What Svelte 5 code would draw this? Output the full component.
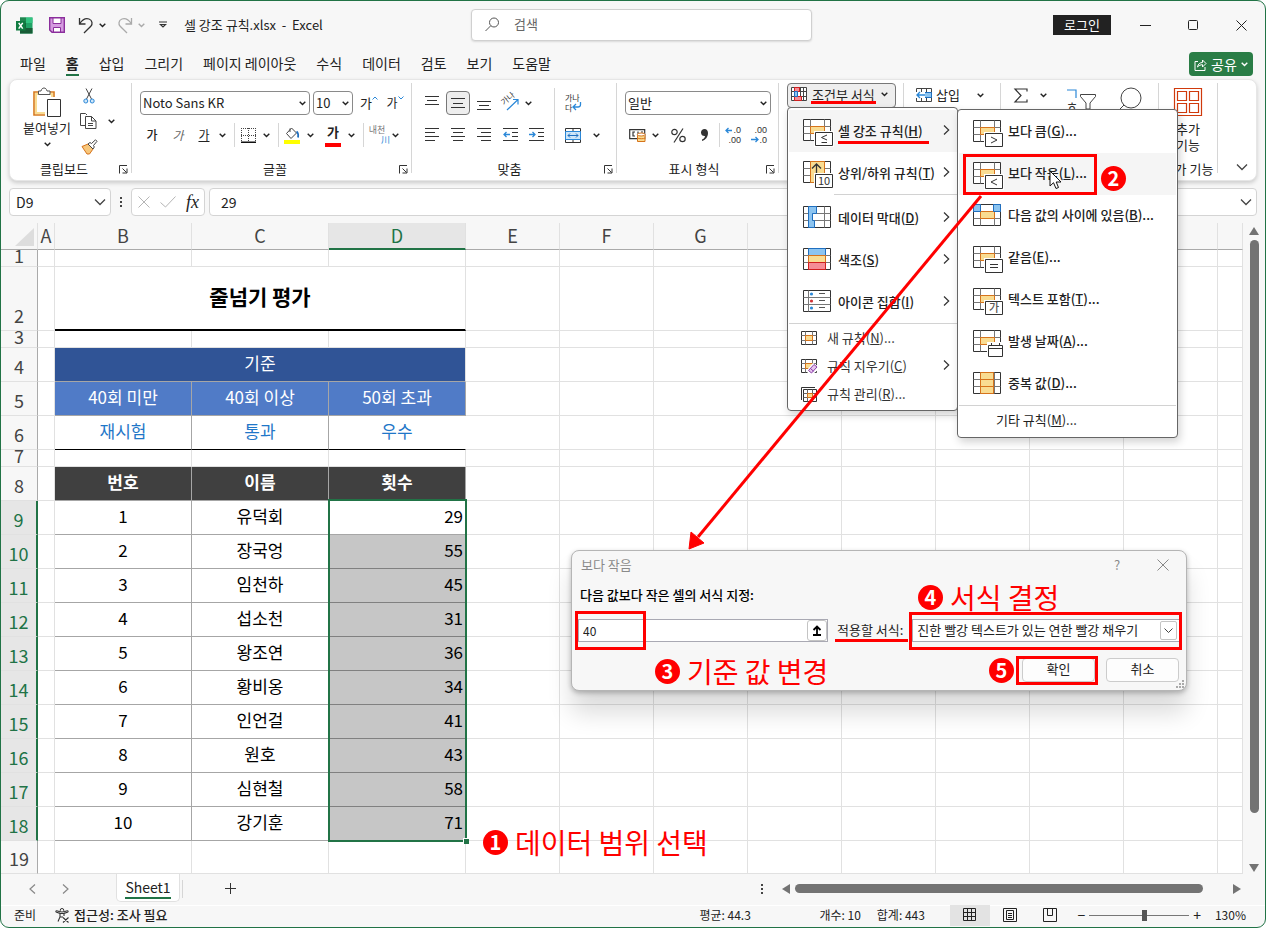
<script>
	const tabs = ['파일', '홈', '삽입', '그리기', '페이지 레이아웃', '수식', '데이터', '검토', '보기', '도움말'];

	const mainMenu = [
		{ text: '셀 강조 규칙', key: 'H', icon: 'le', sub: true, active: true },
		{ text: '상위/하위 규칙', key: 'T', icon: 'top', sub: true, line: 'short' },
		{ text: '데이터 막대', key: 'D', icon: 'bars', sub: true },
		{ text: '색조', key: 'S', icon: 'scale', sub: true },
		{ text: '아이콘 집합', key: 'I', icon: 'set', sub: true, line: 'full' },
		{ text: '새 규칙', key: 'N', icon: 'new', small: true, dots: true },
		{ text: '규칙 지우기', key: 'C', icon: 'clear', small: true, sub: true },
		{ text: '규칙 관리', key: 'R', icon: 'manage', small: true, dots: true }
	];

	const subMenu = [
		{ text: '보다 큼', key: 'G', icon: 'gt' },
		{ text: '보다 작음', key: 'L', icon: 'lt', active: true },
		{ text: '다음 값의 사이에 있음', key: 'B', icon: 'between' },
		{ text: '같음', key: 'E', icon: 'eq' },
		{ text: '텍스트 포함', key: 'T', icon: 'text' },
		{ text: '발생 날짜', key: 'A', icon: 'date' },
		{ text: '중복 값', key: 'D', icon: 'dup' }
	];

	const people = [
		['유덕회', 29],
		['장국엉', 55],
		['임천하', 45],
		['섭소천', 31],
		['왕조연', 36],
		['황비옹', 34],
		['인언걸', 41],
		['원호', 43],
		['심현철', 58],
		['강기훈', 71]
	];

	const columns = ['A', 'B', 'C', 'D', 'E', 'F', 'G', 'H', 'I', 'J', 'K', 'L', ''];
	const rest = Array(9).fill('');

	let limit = $state('40');
	let zoom = $state(56);
</script>

{#snippet chev()}
	<svg class="chev" width="7" height="5" viewBox="0 0 7 5" aria-hidden="true">
		<path d="M.7 .8 3.5 3.6 6.3 .8" fill="none" stroke="currentColor" stroke-width="1.4" />
	</svg>
{/snippet}

{#snippet bigChev()}
	<svg width="12" height="8" viewBox="0 0 12 8" aria-hidden="true">
		<path d="M1 1.5 6 6.5 11 1.5" fill="none" stroke="#444" stroke-width="1.3" />
	</svg>
{/snippet}

{#snippet launcher()}
	<button class="launcher" aria-label="옵션">
		<svg width="9" height="9" viewBox="0 0 9 9">
			<path d="M.5 8.5V.5H8M3.5 3.5 7.5 7.5M8 3.5V8H3.5" fill="none" stroke="#333" />
		</svg>
	</button>
{/snippet}

{#snippet lines(rows)}
	<svg width="14" height="14" viewBox="0 0 14 14" aria-hidden="true">
		{#each rows as [x, y, len]}
			<path d="M{x} {y}.5h{len}" stroke="#333" />
		{/each}
	</svg>
{/snippet}

{#snippet ruleIcon(kind)}
	<svg width="32" height="28" viewBox="0 0 32 28" aria-hidden="true">
		<path d="M.5 .5h27v21H.5z" fill="#fff" stroke="#333" />
		{#if kind === 'set'}
			<path d="M.5 7.5h27M.5 14.5h27" stroke="#777" />
			<path d="M5.5 .5v21" stroke="#777" />
			<circle cx="8.5" cy="4" r="1.6" fill="#2b88d8" />
			<circle cx="8.5" cy="11" r="1.6" fill="#d13438" />
			<circle cx="8.5" cy="18" r="1.6" fill="#2b88d8" />
			<path d="M16 3.5h6M16 10.5h6M16 17.5h6" stroke="#555" />
		{:else}
			<path d="M7.5 .5v21M21.5 .5v21M.5 7.5h27M.5 14.5h27" stroke="#777" fill="none" />
		{/if}
		{#if ['le', 'gt', 'lt', 'between', 'eq', 'text', 'date'].includes(kind)}
			<path d="M7.5 7.5h14v7h-14z" fill="#f9dc92" stroke="#d6731b" />
		{/if}
		{#if kind === 'between'}
			<path d="M.5 .5h7v7h-7zM20.5 .5h7v7h-7z" fill="#8cc4f0" stroke="#1f6fc0" />
		{:else if kind === 'top'}
			<path d="M7.5 .5h14v21h-14z" fill="#f9dc92" stroke="#d6731b" />
			<path d="M13.5 17V3M9 7.5 13.5 3 18 7.5" fill="none" stroke="#333" stroke-width="1.3" />
		{:else if kind === 'bars'}
			<path d="M5.5 .5h8v7h-4v7h2v7h-6z" fill="#8cc4f0" stroke="#1f6fc0" />
		{:else if kind === 'scale'}
			<path d="M5.5 .5h17v7h-17z" fill="#8cc4f0" stroke="#1f6fc0" />
			<path d="M5.5 7.5h17v7h-17z" fill="#f9dc92" stroke="#d6731b" />
			<path d="M5.5 14.5h17v7h-17z" fill="#f58c96" stroke="#d11f1f" />
		{:else if kind === 'dup'}
			<path d="M7.5 .5h13v21h-13zM7.5 7.5h13M7.5 14.5h13" fill="#f9dc92" stroke="#d6731b" />
		{/if}
		{#if ['le', 'gt', 'lt', 'eq', 'text', 'top'].includes(kind)}
			<path d="M11 12h20v16H11z" fill="#fff" />
			<path d="M12.5 13.5h17v13h-17z" fill="#fff" stroke="#333" />
		{/if}
		{#if kind === 'le'}
			<path d="M24 16 18.5 18.5 24 21M18.5 23.5H24" fill="none" stroke="#333" />
		{:else if kind === 'gt'}
			<path d="M18 17 24 20 18 23" fill="none" stroke="#333" />
		{:else if kind === 'lt'}
			<path d="M24 17 18 20 24 23" fill="none" stroke="#333" />
		{:else if kind === 'eq'}
			<path d="M17 18.5h8M17 21.5h8" stroke="#333" />
		{:else if kind === 'text'}
			<text x="21" y="24" text-anchor="middle" font-size="11" fill="#555">가</text>
		{:else if kind === 'top'}
			<text x="21" y="24" text-anchor="middle" font-size="11" font-weight="400" fill="#333">10</text>
		{:else if kind === 'date'}
			<path d="M14 12h17v16H14z" fill="#fff" />
			<path d="M15.5 15.5h14v11h-14zM15.5 18.5h14M18.5 13v3M26.5 13v3" fill="none" stroke="#333" />
		{/if}
	</svg>
{/snippet}

{#snippet smallIcon(kind)}
	<svg width="17" height="15" viewBox="0 0 17 15" aria-hidden="true">
		{#if kind === 'manage'}
			<path d="M.5 13V.5H14" fill="none" stroke="#333" />
			<g transform="translate(2 2)">
				<path d="M.5 .5h13v12H.5z" fill="#fff" stroke="#333" />
				<path d="M4.5 .5v12M9.5 .5v12M.5 4.5h13M.5 8.5h13" stroke="#666" />
				<path d="M4.5 4.5h5v4h-5z" fill="#f9dc92" stroke="#d6731b" />
			</g>
		{:else}
			<path d="M.5 .5h15v13H.5z" fill="#fff" stroke="#333" />
			<path d="M4.5 .5v13M11.5 .5v13M.5 4.5h15M.5 9.5h15" stroke="#777" />
			<path d="M4.5 4.5h7v5h-7z" fill="#f9dc92" stroke="#d6731b" />
			{#if kind === 'clear'}
				<path d="M5 12 12 4l5 3v4l-5 4H8z" fill="#fff" />
				<path d="M7.5 11.5 13 5.5l3 2.5-5.5 6zM9.5 9.5l3 2.7" fill="#e6c6ee" stroke="#8b3fa8" />
			{/if}
		{/if}
	</svg>
{/snippet}

{#snippet menuItem(item)}
	<button class="item" class:small={item.small} class:active={item.active} role="menuitem">
		<span class="ico">
			{#if item.small}{@render smallIcon(item.icon)}{:else}{@render ruleIcon(item.icon)}{/if}
		</span>
		<span class="label">{item.text}(<u>{item.key}</u>){item.dots ? '...' : ''}</span>
		{#if item.sub}
			<svg class="arrow" width="7" height="12" viewBox="0 0 7 12" aria-hidden="true">
				<path d="M1 1.5 5.7 6 1 10.5" fill="none" stroke="#333" stroke-width="1.2" />
			</svg>
		{/if}
	</button>
	{#if item.line}<hr class={item.line} />{/if}
{/snippet}

<div class="window">
	<header class="titlebar">
		<div class="quick">
			<svg width="17" height="17" viewBox="0 0 17 17" aria-hidden="true">
				<path d="M4 .5h12.5v16H4z" fill="#21a366" />
				<path d="M4 .5h6v5.5H4z" fill="#21854f" />
				<path d="M10 .5h6.500v5.500H10z" fill="#33c481" />
				<path d="M4 6h6v5h6.5v5.5H4z" fill="#185c37" />
				<path d="M0 4h9.5v9.5H0z" fill="#107c41" />
				<path d="M2.7 5.800 6.700 11.700M6.700 5.800 2.700 11.700" stroke="#fff" stroke-width="1.5" />
			</svg>
			<button class="plain save" aria-label="저장">
				<svg width="16" height="16" viewBox="0 0 16 16">
					<path d="M.7 .7h14.6v14.6H3L.7 13z" fill="#d59be0" stroke="#8b2f9c" stroke-width="1.4" />
					<path d="M4 1h8v5.5H4zM4.500 10.500h7V15h-7z" fill="#fff" stroke="#8b2f9c" />
				</svg>
			</button>
			<button class="plain undo" aria-label="실행 취소">
				<svg width="16" height="17" viewBox="0 0 16 17">
					<path d="M1.5 1v6h6M1.800 6.500C4.500 2.500 8 1 11 2c3.500 1.300 3.800 5 1.800 7.200L6 16" fill="none" stroke="#333" stroke-width="1.3" />
				</svg>
				{@render chev()}
			</button>
			<button class="plain undo off" aria-label="다시 실행">
				<svg width="16" height="17" viewBox="0 0 16 17">
					<path d="M14.5 1v6h-6M14.200 6.500C11.500 2.500 8 1 5 2 1.500 3.300 1.200 7 3.200 9.200L10 16" fill="none" stroke="#aaa" stroke-width="1.3" />
				</svg>
				{@render chev()}
			</button>
			<button class="plain custom" aria-label="빠른 실행 사용자 지정">
				<svg width="8" height="8" viewBox="0 0 8 8"><path d="M0 1h8M1.500 3.500 4 6 6.500 3.500z" fill="none" stroke="#333" stroke-width="1.2" /></svg>
			</button>
			<span class="doc">셀 강조 규칙.xlsx&nbsp; -&nbsp; Excel</span>
		</div>
		<label class="search">
			<svg width="15" height="15" viewBox="0 0 15 15" aria-hidden="true">
				<circle cx="9" cy="5.500" r="4.500" fill="none" stroke="#555" />
				<path d="M5.700 8.800.5 14" stroke="#555" />
			</svg>
			<input type="text" placeholder="검색" aria-label="검색" />
		</label>
		<div class="sys">
			<button class="login">로그인</button>
			<button class="plain" aria-label="최소화"><svg width="11" height="11"><path d="M0 5.500h11" stroke="#222" /></svg></button>
			<button class="plain" aria-label="최대화"><svg width="11" height="11"><rect x=".5" y=".5" width="9" height="9" rx="1" fill="none" stroke="#222" /></svg></button>
			<button class="plain" aria-label="닫기"><svg width="11" height="11"><path d="M.5 .5l10 10M10.500 .5l-10 10" stroke="#222" /></svg></button>
		</div>
	</header>

	<nav class="tabs">
		{#each tabs as tab}
			<a href="#{tab}" class:on={tab === '홈'}>{tab}</a>
		{/each}
		<button class="share">
			<svg width="13" height="13" viewBox="0 0 13 13" aria-hidden="true">
				<path d="M4 3.500H1v9h10V9M3.500 9C4 6 6 4.500 8.500 4.500V2L12 5.500 8.500 9V6.700C6.500 6.700 5 7.500 3.500 9z" fill="none" stroke="#fff" />
			</svg>
			공유
			{@render chev()}
		</button>
	</nav>

	<section class="ribbon">
		<div class="group clip">
			<div class="cols">
				<button class="paste">
					<svg width="28" height="31" viewBox="0 0 28 31" aria-hidden="true">
						<path d="M1 5h20v23H1z" fill="#fff" stroke="#d87a1c" stroke-width="1.600" />
						<path d="M3 7h16v19H3z" fill="#fff" stroke="#f9dc92" stroke-width="2" />
						<path d="M5.500 7.500V4H8c.5-2 1.500-3 3-3s2.500 1 3 3h3v3.500z" fill="#fff" stroke="#555" />
						<path d="M12 10h16v21H12z" fill="#fff" />
						<path d="M14.500 12.500h13v17h-13z" fill="#fff" stroke="#333" />
					</svg>
					<span>붙여넣기</span>
					{@render chev()}
				</button>
				<div class="stack">
					<button class="plain" aria-label="잘라내기">
						<svg width="12" height="16" viewBox="0 0 12 16">
							<path d="M3 .5 8.500 11M9 .5 3.500 11" stroke="#444" fill="none" />
							<circle cx="2.800" cy="13" r="2" fill="#cfe6f8" stroke="#2b88d8" />
							<circle cx="9.200" cy="13" r="2" fill="#cfe6f8" stroke="#2b88d8" />
						</svg>
					</button>
					<button class="plain wide" aria-label="복사">
						<svg width="17" height="16" viewBox="0 0 17 16">
							<path d="M5 12.500H.5V.5h5L7 2" fill="none" stroke="#444" />
							<path d="M5.500 3.500h6l4.500 4.500v7.500H5.500zM11.500 3.500V8H16M8 10.500h5M8 12.500h5" fill="#fff" stroke="#444" />
						</svg>
						{@render chev()}
					</button>
					<button class="plain" aria-label="서식 복사">
						<svg width="17" height="15" viewBox="0 0 17 15">
							<path d="M1 7.500 7 5l5 5-3.500 5H6z" fill="#f7c77c" stroke="#d6731b" />
							<path d="M7 5l2-1.500 1.500 1L14.500.8 16 2.300 12.500 6.500l.8 1.500L12 10z" fill="#fff" stroke="#444" />
						</svg>
					</button>
				</div>
			</div>
			<div class="cap">클립보드{@render launcher()}</div>
		</div>
		<i class="rule"></i>

		<div class="group font">
			<div class="row gap3">
				<span class="combo fam"><select aria-label="글꼴"><option>Noto Sans KR</option></select>{@render chev()}</span>
				<span class="combo size"><select aria-label="글꼴 크기"><option>10</option></select>{@render chev()}</span>
				<button class="b" aria-label="글꼴 크게">
					<span class="grow">가</span>
					<svg class="mark" width="6" height="4"><path d="M.5 3.500 3 1l2.500 2.500" fill="none" stroke="#2b88d8" /></svg>
				</button>
				<button class="b" aria-label="글꼴 작게">
					<span>가</span>
					<svg class="mark" width="6" height="4"><path d="M.5 .5 3 3 5.500 .5" fill="none" stroke="#2b88d8" /></svg>
				</button>
			</div>
			<div class="row">
				<button class="b"><b>가</b></button>
				<button class="b"><em>가</em></button>
				<button class="b"><u>가</u></button>
				<button class="c" aria-label="밑줄 종류">{@render chev()}</button>
				<i class="sep"></i>
				<button class="b" aria-label="테두리">
					<svg width="15" height="15" viewBox="0 0 15 15">
						<path d="M0 .5h15M.5 0v14M14.500 0v14M7.500 0v14M0 7.500h15" stroke="#444" stroke-dasharray="1 1" />
						<path d="M0 14.300h15" stroke="#111" stroke-width="1.400" />
					</svg>
				</button>
				<button class="c" aria-label="테두리 종류">{@render chev()}</button>
				<i class="sep"></i>
				<button class="b" aria-label="채우기 색">
					<svg width="16" height="17" viewBox="0 0 16 17">
						<path d="M2.500 6.500 7.500 1l5 5-5.500 5.500zM6 1.500V5" fill="#fff" stroke="#444" />
						<path d="M12.500 4.500c1.500 1 2 3 1.500 6" fill="none" stroke="#1f6fc0" stroke-width="1.800" />
						<path d="M0 13h16v4H0z" fill="#ff0" />
					</svg>
				</button>
				<button class="c" aria-label="채우기 색 선택">{@render chev()}</button>
				<button class="b ink">가</button>
				<button class="c" aria-label="글꼴 색 선택">{@render chev()}</button>
				<i class="sep"></i>
				<button class="b ruby"><span>내천</span><span class="sub">川</span></button>
				<button class="c" aria-label="윗주">{@render chev()}</button>
			</div>
			<div class="cap">글꼴{@render launcher()}</div>
		</div>
		<i class="rule"></i>

		<div class="group align">
			<div class="cols">
				<div class="left">
					<div class="row">
						<button class="b" aria-label="위쪽 맞춤">{@render lines([[0, 0, 14], [2, 4, 10], [0, 8, 14]])}</button>
						<button class="b on" aria-label="가운데 맞춤">{@render lines([[0, 2, 14], [2, 7, 10], [0, 11, 14]])}</button>
						<button class="b" aria-label="아래쪽 맞춤">{@render lines([[0, 5, 14], [2, 9, 10], [0, 13, 14]])}</button>
						<button class="b" aria-label="방향">
							<svg width="17" height="16" viewBox="0 0 17 16">
								<text x="0" y="9" font-size="8" fill="#333" transform="rotate(-40 3 7)">가나</text>
								<path d="M5 15 15.500 5M11 4.500h5v5" fill="none" stroke="#2b88d8" stroke-width="1.200" />
							</svg>
						</button>
						<button class="c" aria-label="방향 종류">{@render chev()}</button>
					</div>
					<div class="row">
						<button class="b" aria-label="왼쪽">{@render lines([[0, 0, 14], [0, 4, 10], [0, 8, 14], [0, 12, 10]])}</button>
						<button class="b" aria-label="가운데">{@render lines([[0, 0, 14], [2, 4, 10], [0, 8, 14], [2, 12, 10]])}</button>
						<button class="b" aria-label="오른쪽">{@render lines([[0, 0, 14], [4, 4, 10], [0, 8, 14], [4, 12, 10]])}</button>
						<button class="b" aria-label="내어쓰기">
							<svg width="15" height="14" viewBox="0 0 15 14">
								<path d="M0 .5h15M9 4.500h6M9 8.500h6M0 12.500h15" stroke="#333" />
								<path d="M7 6.500H1M3.500 4 1 6.500 3.500 9" fill="none" stroke="#2b88d8" stroke-width="1.300" />
							</svg>
						</button>
						<button class="b" aria-label="들여쓰기">
							<svg width="15" height="14" viewBox="0 0 15 14">
								<path d="M0 .5h15M9 4.500h6M9 8.500h6M0 12.500h15" stroke="#333" />
								<path d="M0 6.500h6M3.500 4 6 6.500 3.500 9" fill="none" stroke="#2b88d8" stroke-width="1.300" />
							</svg>
						</button>
					</div>
				</div>
				<i class="sep tall"></i>
				<div>
					<div class="row">
						<button class="b" aria-label="자동 줄 바꿈">
							<svg width="17" height="20" viewBox="0 0 17 20">
								<text x="0" y="8" font-size="8" fill="#333">가나</text>
								<text x="0" y="18" font-size="8" fill="#333">다</text>
								<path d="M15.500 9v2.500c0 1.500-1 2.500-2.500 2.500H8.500M11 11 8 14l3 3" fill="none" stroke="#2b88d8" stroke-width="1.300" />
							</svg>
						</button>
					</div>
					<div class="row">
						<button class="b" aria-label="병합">
							<svg width="16" height="15" viewBox="0 0 16 15">
								<path d="M.5 .5h15v14H.5zM8 .5v3M8 11.500v3" fill="#fff" stroke="#333" />
								<path d="M.5 3.500h15v8H.5z" fill="#cfe6f8" stroke="#2b88d8" />
								<path d="M3 7.500h10M5 5.500l-2 2 2 2M11 5.500l2 2-2 2" fill="none" stroke="#1f6fc0" />
							</svg>
						</button>
						<button class="c far" aria-label="병합 종류">{@render chev()}</button>
					</div>
				</div>
			</div>
			<div class="cap">맞춤{@render launcher()}</div>
		</div>
		<i class="rule"></i>

		<div class="group num">
			<div class="row">
				<span class="combo fmt"><select aria-label="표시 형식"><option>일반</option></select>{@render chev()}</span>
			</div>
			<div class="row">
				<button class="b" aria-label="회계 표시 형식">
					<svg width="17" height="15" viewBox="0 0 17 15">
						<path d="M.7 1.700h15v9H.7zM6 4H4v4h2M9 3.500v5M12 4h2" fill="none" stroke="#333" stroke-width="1.200" />
						<path d="M8.500 6.500h7.500v7H8.500z" fill="#f9dc92" stroke="#d6731b" />
						<ellipse cx="12.200" cy="6.500" rx="3.800" ry="1.500" fill="#fff" stroke="#d6731b" />
						<path d="M8.500 10c1 1 6.500 1 7.500 0" fill="none" stroke="#d6731b" />
					</svg>
				</button>
				<button class="c" aria-label="통화 선택">{@render chev()}</button>
				<button class="b" aria-label="백분율">
					<svg width="15" height="15" viewBox="0 0 15 15">
						<circle cx="3.500" cy="4" r="2.700" fill="none" stroke="#333" stroke-width="1.200" />
						<circle cx="11.500" cy="11" r="2.700" fill="none" stroke="#333" stroke-width="1.200" />
						<path d="M12 .5 3 14.500" stroke="#333" stroke-width="1.200" />
					</svg>
				</button>
				<button class="b" aria-label="쉼표">
					<svg width="9" height="14" viewBox="0 0 9 14">
						<path d="M4.500 1C6.800 1 8 2.700 8 5c0 4-2.500 7-6 8v-1.500c1.700-.6 2.800-1.700 3-3.500C2.800 8.200 1 7 1 4.500 1 2.500 2.500 1 4.500 1z" fill="#333" />
					</svg>
				</button>
				<i class="sep"></i>
				<button class="b digits" aria-label="자릿수 늘림">
					<svg width="17" height="20" viewBox="0 0 17 20">
						<path d="M1 5.500h6M3.500 3 1 5.500 3.500 8" fill="none" stroke="#2b88d8" stroke-width="1.300" />
						<text x="16" y="8" font-size="9" text-anchor="end" fill="#333">.0</text>
						<text x="16" y="18" font-size="9" text-anchor="end" fill="#333">.00</text>
					</svg>
				</button>
				<button class="b digits" aria-label="자릿수 줄임">
					<svg width="17" height="20" viewBox="0 0 17 20">
						<text x="16" y="8" font-size="9" text-anchor="end" fill="#333">.00</text>
						<text x="16" y="18" font-size="9" text-anchor="end" fill="#333">.0</text>
						<path d="M0 14.500h7M4.500 12 7 14.500 4.500 17" fill="none" stroke="#2b88d8" stroke-width="1.300" />
					</svg>
				</button>
			</div>
			<div class="cap">표시 형식{@render launcher()}</div>
		</div>
		<i class="rule"></i>

		<div class="group styles">
			<button class="cond">
				<svg width="17" height="15" viewBox="0 0 17 15" aria-hidden="true">
					<path d="M.5 .5h15v13H.5zM3.500 .5v13M9.500 .5v13M12.500 .5v13M.5 4.500h15M.5 9.500h15" fill="#fff" stroke="#444" />
					<path d="M3.500 .5h5v4h-5zM3.500 9.500h7v4h-7z" fill="#f58c96" stroke="#d11f1f" />
					<path d="M3.500 4.500h3v5h-3z" fill="#8cc4f0" stroke="#1f6fc0" />
				</svg>
				<span>조건부 서식</span>
				{@render chev()}
			</button>
		</div>
		<i class="rule"></i>

		<div class="group cells">
			<button class="ins">
				<svg width="17" height="15" viewBox="0 0 17 15" aria-hidden="true">
					<path d="M.5 .5h15v13H.5zM5.500 .5v13M10.500 .5v13M.5 4.500h15M.5 9.500h15" fill="#fff" stroke="#444" />
					<path d="M7.500 4.500h8v5h-8z" fill="#8cc4f0" stroke="#1f6fc0" />
					<path d="M0 4h9v6H0z" fill="#fff" />
					<path d="M9 7H1M4 4 1 7l3 3" fill="none" stroke="#2b88d8" stroke-width="1.400" />
				</svg>
				<span>삽입</span>
				{@render chev()}
			</button>
		</div>
		<i class="rule"></i>

		<div class="group edit">
			<button class="plain" aria-label="합계">
				<svg width="14" height="15" viewBox="0 0 14 15"><path d="M13 3.500V1H1l6 6.500L1 14h12v-2.500" fill="none" stroke="#333" stroke-width="1.200" /></svg>
			</button>
			<button class="plain" aria-label="합계 종류">{@render chev()}</button>
			<button class="plain sort" aria-label="정렬 및 필터">
				<svg width="30" height="30" viewBox="0 0 30 30">
					<path d="M1 1h9v8" fill="none" stroke="#2b88d8" stroke-width="1.200" />
					<text x="0" y="22" font-size="13" fill="#333">ㅎ</text>
					<path d="M14.500 5.500h15v2L24 14v6h-4v-6l-5.500-6.500z" fill="#fff" stroke="#444" />
				</svg>
			</button>
			<button class="plain" aria-label="찾기 및 선택">
				<svg width="24" height="30" viewBox="0 0 24 30">
					<circle cx="13" cy="11" r="10" fill="none" stroke="#444" />
					<path d="M6 18 1 23" stroke="#444" />
				</svg>
			</button>
		</div>
		<i class="rule"></i>

		<div class="group addin">
			<button class="paste">
				<svg width="28" height="28" viewBox="0 0 28 28" aria-hidden="true">
					<path d="M.5 .5h27v27H.5zM3.500 3.500h9v9h-9zM15.500 3.500h9v9h-9zM3.500 15.500h9v9h-9zM15.500 15.500h9v9h-9z" fill="none" stroke="#d03a0c" stroke-width="1.200" />
				</svg>
				<span>추가<br />기능</span>
			</button>
			<div class="cap">추가 기능</div>
		</div>
		<i class="rule"></i>
		<button class="plain collapse" aria-label="리본 메뉴 축소">{@render bigChev()}</button>
	</section>

	<div class="formula">
		<label class="box name"><input aria-label="이름 상자" value="D9" />{@render bigChev()}</label>
		<span class="vdots"><i></i><i></i><i></i></span>
		<div class="box fx">
			<svg width="12" height="12"><path d="M.5 .5l11 11M11.500 .5l-11 11" stroke="#b5b5b5" /></svg>
			<svg width="16" height="12"><path d="M.5 6.500 5.500 11 15.500 .5" fill="none" stroke="#b5b5b5" /></svg>
			<em>fx</em>
		</div>
		<label class="box value"><input aria-label="수식" value="29" />{@render bigChev()}</label>
	</div>

	<main class="sheet">
		<table>
			<colgroup>
				<col class="w-head" /><col class="w-a" /><col class="w-b" /><col class="w-b" /><col class="w-b" />
				{#each Array(8) as _}<col class="w-e" />{/each}
				<col />
			</colgroup>
			<thead>
				<tr>
					<th><svg class="corner" width="19" height="18"><path d="M19 0v18H0z" fill="#ddd" /></svg></th>
					{#each columns as col}<th class:sel={col === 'D'}>{col}</th>{/each}
				</tr>
			</thead>
			<tbody>
				<tr class="thin"><th><span>1</span></th><td></td><td></td><td></td><td></td>{#each rest as _}<td></td>{/each}</tr>
				<tr class="title"><th>2</th><td></td><td colspan="3">줄넘기 평가</td>{#each rest as _}<td></td>{/each}</tr>
				<tr class="thin"><th><span>3</span></th><td></td><td></td><td></td><td></td>{#each rest as _}<td></td>{/each}</tr>
				<tr><th>4</th><td></td><td class="navy" colspan="3">기준</td>{#each rest as _}<td></td>{/each}</tr>
				<tr><th>5</th><td></td><td class="blue">40회 미만</td><td class="blue">40회 이상</td><td class="blue">50회 초과</td>{#each rest as _}<td></td>{/each}</tr>
				<tr><th>6</th><td></td><td class="grade">재시험</td><td class="grade">통과</td><td class="grade last">우수</td>{#each rest as _}<td></td>{/each}</tr>
				<tr class="thin"><th><span>7</span></th><td></td><td></td><td></td><td></td>{#each rest as _}<td></td>{/each}</tr>
				<tr><th>8</th><td></td><td class="dark">번호</td><td class="dark">이름</td><td class="dark">횟수</td>{#each rest as _}<td></td>{/each}</tr>
				{#each people as [name, count], i}
					<tr>
						<th class="sel">{i + 9}</th><td></td>
						<td class="data">{i + 1}</td>
						<td class="data">{name}</td>
						<td class="data count" class:shade={i > 0}>
							{count}
							{#if i === 0}<span class="range"><i></i></span>{/if}
						</td>
						{#each rest as _}<td></td>{/each}
					</tr>
				{/each}
				<tr><th>19</th><td></td><td></td><td></td><td></td>{#each rest as _}<td></td>{/each}</tr>
			</tbody>
		</table>
		<div class="vscroll">
			<svg width="10" height="8"><path d="M5 0l5 8H0z" fill="#737373" /></svg>
			<i></i>
			<svg width="10" height="8"><path d="M5 8l5-8H0z" fill="#737373" /></svg>
		</div>
	</main>

	<div class="sheetbar">
		<button class="plain nav" aria-label="이전 시트"><svg width="7" height="10"><path d="M6 .5 1 5l5 4.500" fill="none" stroke="#888" stroke-width="1.200" /></svg></button>
		<button class="plain nav" aria-label="다음 시트"><svg width="7" height="10"><path d="M1 .5 6 5 1 9.500" fill="none" stroke="#888" stroke-width="1.200" /></svg></button>
		<button class="tab"><span>Sheet1</span></button>
		<i class="sep"></i>
		<button class="plain add" aria-label="새 시트"><svg width="11" height="11"><path d="M5.500 0v11M0 5.500h11" stroke="#333" /></svg></button>
		<div class="hscroll">
			<span class="vdots"><i></i><i></i><i></i></span>
			<svg width="8" height="10"><path d="M0 5l8-5v10z" fill="#737373" /></svg>
			<i class="thumb"></i>
			<svg width="8" height="10"><path d="M8 5L0 0v10z" fill="#737373" /></svg>
		</div>
	</div>

	<footer class="status">
		<span>준비</span>
		<button class="plain acc">
			<svg width="16" height="15" viewBox="0 0 16 15" aria-hidden="true">
				<circle cx="7" cy="2.300" r="1.800" fill="none" stroke="#333" />
				<path d="M1 4l4 1.500V9l-2 4.500M13 4 9 5.500V8M5 5.500h4M8 9.500l5.500 5M13.500 9.500l-5.500 5M5 9h3M1 4c-.5-1 .5-1.500 1-1.200L5.500 4M13 4c.5-1-.5-1.500-1-1.200L8.500 4" fill="none" stroke="#333" stroke-width="1.100" />
			</svg>
			접근성: 조사 필요
		</button>
		<div class="stats">
			<span>평균: 44.3</span>
			<span>개수: 10</span>
			<span>합계: 443</span>
		</div>
		<button class="view on" aria-label="기본"><svg width="14" height="14"><path d="M.5 .5h12v12H.5zM4.500 .5v12M8.500 .5v12M.5 4.500h12M.5 8.500h12" fill="none" stroke="#222" /></svg></button>
		<button class="view" aria-label="페이지 레이아웃"><svg width="14" height="14"><path d="M.5 .5h13v13H.5zM3.500 2.500h7v9h-7zM5 5.500h4M5 7.500h4M5 9.500h4" fill="none" stroke="#222" /></svg></button>
		<button class="view" aria-label="페이지 나누기"><svg width="14" height="14"><path d="M.5 .5h13v13H.5zM4.500 .5v7h5v-7" fill="none" stroke="#222" /></svg></button>
		<div class="zoom">
			<span>−</span>
			<input type="range" min="0" max="100" bind:value={zoom} aria-label="확대/축소" />
			<span>+</span>
		</div>
		<span class="pct">130%</span>
	</footer>

	<div class="menu main" role="menu">
		{#each mainMenu as item}{@render menuItem(item)}{/each}
	</div>

	<div class="menu side" role="menu">
		{#each subMenu as item}{@render menuItem({ ...item, dots: true })}{/each}
		<hr class="full" />
		<button class="item more" role="menuitem"><span>기타 규칙(<u>M</u>)...</span></button>
	</div>

	<form class="dialog" onsubmit={(e) => e.preventDefault()}>
		<div class="dlg-title">
			<span>보다 작음</span>
			<button type="button" class="plain">?</button>
			<button type="button" class="plain" aria-label="닫기"><svg width="12" height="12"><path d="M.5 .5l11 11M11.500 .5l-11 11" stroke="#888" /></svg></button>
		</div>
		<label class="lead" for="limit">다음 값보다 작은 셀의 서식 지정:</label>
		<div class="dlg-row">
			<div class="field">
				<input id="limit" bind:value={limit} />
				<button type="button" aria-label="범위 선택">
					<svg width="10" height="11"><path d="M5 9V2M1.500 5 5 1.500 8.500 5M1 10h8" fill="none" stroke="#000" stroke-width="1.800" /></svg>
				</button>
			</div>
			<label class="with" for="format">적용할 서식:</label>
			<div class="field pick">
				<select id="format"><option>진한 빨강 텍스트가 있는 연한 빨강 채우기</option></select>
				<span class="drop"><svg width="9" height="6"><path d="M.5 .5l4 4 4-4" fill="none" stroke="#444" /></svg></span>
			</div>
		</div>
		<div class="dlg-actions">
			<button type="submit">확인</button>
			<button type="button">취소</button>
		</div>
		<svg class="grip" width="9" height="9"><path d="M6 1h2M3 4h2M6 4h2M0 7h2M3 7h2M6 7h2" stroke="#aaa" stroke-width="2" /></svg>
	</form>

	<div class="notes">
		<i class="frame f-item"></i>
		<i class="frame f-input"></i>
		<i class="frame f-select"></i>
		<i class="frame f-ok"></i>
		<i class="under u-cond"></i>
		<i class="under u-rule"></i>
		<i class="under u-with"></i>
		<svg class="pointer" width="300" height="362" viewBox="0 0 300 362">
			<path d="M295 2 12 343" stroke="#f00" stroke-width="3" />
			<path d="M3 355 5 338 18 349z" fill="#f00" stroke="#f00" />
		</svg>
		<svg class="cursor" width="15" height="21" viewBox="0 0 15 21">
			<path d="M1 1v15l3.500-3.300L7 18.500l2.500-1-2.300-5.500H12z" fill="#fff" stroke="#111" />
		</svg>
		<p class="n1"><b>1</b>데이터 범위 선택</p>
		<p class="n2"><b>2</b></p>
		<p class="n3"><b>3</b>기준 값 변경</p>
		<p class="n4"><b>4</b>서식 결정</p>
		<p class="n5"><b>5</b></p>
	</div>
</div>

<style>
	:global(body) {
		background: #fff;
		font-family: 'Noto Sans CJK KR', 'Noto Sans', sans-serif;
		font-size: 13px;
		color: #222;
	}

	.window,
	.window :global(*) {
		box-sizing: border-box;
	}

	.window {
		position: relative;
		min-height: 100vh;
		border: 1px solid #217346;
		border-radius: 9px;
		background: #f7f7f7;
		display: flex;
		flex-direction: column;
		overflow: hidden;
		line-height: 18px;
	}

	button,
	input,
	select {
		font: inherit;
		color: inherit;
		margin: 0;
		padding: 0;
		border: 0;
		background: none;
		outline: none;
		min-width: 0;
		appearance: none;
	}

	button {
		display: flex;
		align-items: center;
		justify-content: center;
		white-space: nowrap;
	}

	svg {
		display: block;
		flex: none;
		overflow: visible;
	}

	/* title bar */
	.titlebar {
		display: flex;
		align-items: center;
		height: 48px;
	}

	.quick {
		flex: 0 0 470px;
		display: flex;
		align-items: center;
		padding-left: 15px;
	}

	.save {
		margin: 0 13px 0 16px;
	}

	.undo {
		gap: 5px;
		margin-right: 11px;
	}

	.off {
		color: #aaa;
	}

	.custom {
		margin: 0 17px 0 3px;
	}

	.search {
		flex: 0 1 341px;
		height: 32px;
		display: flex;
		align-items: center;
		gap: 14px;
		padding: 0 0 2px 13px;
		background: #fff;
		border: 1px solid #d0d0d0;
		border-radius: 4px;
		box-shadow: 0 1px 2px rgba(0, 0, 0, 0.12);
	}

	.search input {
		flex: 1;
	}

	.search input::placeholder {
		color: #666;
		opacity: 1;
	}

	.sys {
		margin-left: auto;
		display: flex;
		align-items: center;
	}

	.sys .plain {
		width: 48px;
		height: 32px;
	}

	.login {
		width: 58px;
		height: 20px;
		margin-right: 10px;
		background: #222;
		color: #fff;
	}

	/* tabs */
	.tabs {
		display: flex;
		align-items: center;
		gap: 20px;
		height: 30px;
		padding: 0 12px 0 19px;
		font-size: 14px;
	}

	.tabs a {
		color: #222;
		text-decoration: none;
		height: 24px;
		line-height: 22px;
		white-space: nowrap;
	}

	.tabs a.on {
		font-weight: 700;
		border-bottom: 2px solid #217346;
	}

	.share {
		margin-left: auto;
		width: 64px;
		height: 24px;
		gap: 4px;
		border-radius: 4px;
		background: #2a7d46;
		color: #fff;
	}

	/* ribbon */
	.ribbon {
		display: flex;
		margin: 0 8px;
		height: 102px;
		border: 1px solid #e6e6e6;
		border-radius: 8px;
		background: #fff;
		box-shadow: 0 2px 4px rgba(0, 0, 0, 0.18);
	}

	.group {
		flex: none;
		padding-top: 7px;
		display: flex;
		flex-direction: column;
	}

	.rule {
		flex: none;
		width: 1px;
		height: 90px;
		margin-top: 3px;
		background: #d6d6d6;
	}

	.cap {
		position: relative;
		margin-top: auto;
		height: 18px;
		margin-bottom: 2px;
		line-height: 17px;
		text-align: center;
		white-space: nowrap;
	}

	.launcher {
		position: absolute;
		right: 3px;
		top: 5px;
	}

	.row,
	.cols {
		display: flex;
		align-items: center;
	}

	.row {
		height: 32px;
	}

	.gap3 {
		gap: 3px;
		padding-left: 1px;
	}

	.b {
		position: relative;
		width: 26px;
		height: 24px;
		font-size: 12px;
	}

	.b b {
		font-weight: 500;
	}

	.b.on {
		width: 24px;
		margin: 0 1px;
		border: 1px solid #777;
		border-radius: 4px;
		background: #eee;
	}

	.c {
		width: 15px;
		height: 24px;
		justify-content: flex-start;
		padding-left: 2px;
	}

	.c.far {
		padding-left: 7px;
	}

	.sep {
		flex: none;
		width: 1px;
		height: 24px;
		margin-left: 2px;
		background: #d6d6d6;
	}

	.sep.tall {
		height: 62px;
		margin: 0 5px;
	}

	.clip {
		width: 121px;
	}

	.clip .cols {
		height: 70px;
		align-items: flex-start;
		padding-left: 8px;
	}

	.clip .cap {
		padding-right: 13px;
	}

	.paste {
		flex-direction: column;
		line-height: 18px;
	}

	.clip .paste {
		width: 58px;
		gap: 1px;
	}

	.clip .paste .chev {
		margin-top: 4px;
	}

	.stack {
		display: flex;
		flex-direction: column;
		width: 42px;
	}

	.stack .plain {
		width: 26px;
		height: 25px;
		margin-top: -2px;
		margin-bottom: 2px;
		padding-bottom: 3px;
	}

	.stack .wide {
		width: 42px;
		gap: 11px;
		justify-content: flex-start;
		padding-left: 4px;
	}

	.font {
		width: 279px;
		padding-left: 7px;
	}

	.gap3 .b {
		margin-right: -3px;
	}

	.gap3 .grow {
		font-size: 13px;
	}

	.mark {
		align-self: flex-start;
		margin-top: 5px;
	}

	.combo {
		position: relative;
		display: flex;
		height: 24px;
		border: 1px solid #8a8a8a;
		border-radius: 4px;
		background: #fff;
	}

	.combo select {
		width: 100%;
		padding-left: 2px;
	}

	.combo .chev {
		position: absolute;
		right: 3px;
		top: 9px;
		pointer-events: none;
	}

	.fam {
		width: 170px;
	}

	.size {
		width: 40px;
	}

	.fmt {
		width: 146px;
	}

	.font em {
		font-style: italic;
		color: #666;
	}

	.b.ink {
		padding-bottom: 6px;
		font-size: 13px;
		font-weight: 700;
		line-height: 12px;
	}

	.ink::after {
		content: '';
		position: absolute;
		left: 5px;
		right: 5px;
		bottom: 0;
		height: 4px;
		background: #f00;
	}

	.ruby {
		flex-direction: column;
		font-size: 9px;
		line-height: 10px;
		color: #777;
	}

	.ruby .sub {
		align-self: flex-end;
		color: #2b88d8;
	}

	.digits {
		font-family: 'Liberation Sans', sans-serif;
	}

	.align {
		width: 204px;
		padding-left: 7px;
	}

	.left {
		width: 130px;
	}

	.align .cap {
		padding-right: 16px;
	}

	.num {
		width: 161px;
		padding-left: 7px;
	}

	.num .combo {
		margin-left: 1px;
	}

	.num .cap {
		padding-right: 14px;
	}

	.styles {
		width: 124px;
		padding: 3px 0 0 8px;
	}

	.cond {
		width: 109px;
		height: 25px;
		gap: 4px;
		justify-content: flex-start;
		padding: 0 0 2px 3px;
		border: 1px solid #777;
		border-radius: 4px;
		background: #eee;
	}

	.cond .chev {
		margin-left: 2px;
	}

	.cells {
		width: 96px;
		padding-left: 12px;
	}

	.ins {
		height: 16px;
		gap: 3px;
		justify-content: flex-start;
	}

	.ins .chev {
		margin-left: 14px;
	}

	.edit {
		width: 157px;
		flex-direction: row;
		align-items: flex-start;
		padding-left: 13px;
		gap: 12px;
	}

	.edit .plain {
		min-height: 16px;
	}

	.edit .sort {
		margin: 2px 10px 0 7px;
	}

	.addin {
		width: 58px;
	}

	.addin .paste {
		line-height: 16px;
		gap: 5px;
		margin-top: 1px;
	}

	.collapse {
		align-self: flex-end;
		margin: 0 8px 9px auto;
	}

	/* formula bar */
	.formula {
		display: flex;
		margin: 7px 8px 0;
		height: 28px;
		font-size: 14px;
	}

	.box {
		display: flex;
		align-items: center;
		background: #fff;
		border: 1px solid #d4d4d4;
		border-radius: 4px;
	}

	.box input {
		flex: 1;
		width: 0;
	}

	.name {
		width: 102px;
		padding: 0 4px 0 6px;
	}

	.vdots {
		width: 20px;
		display: flex;
		flex-direction: column;
		align-items: center;
		justify-content: center;
		gap: 2px;
	}

	.vdots i {
		width: 2px;
		height: 2px;
		background: #444;
	}

	.fx {
		width: 74px;
		gap: 10px;
		padding-left: 6px;
		margin-right: 4px;
	}

	.fx em {
		font-family: 'Liberation Serif', serif;
		font-size: 18px;
	}

	.value {
		flex: 1;
		padding: 0 4px 0 11px;
	}

	/* grid */
	.sheet {
		display: flex;
		margin-top: 7px;
	}

	table {
		flex: 1;
		width: 0;
		table-layout: fixed;
		border-collapse: separate;
		border-spacing: 0;
		background: #fff;
		font-size: 17px;
	}

	.w-head {
		width: 37px;
	}

	.w-a {
		width: 17px;
	}

	.w-b {
		width: 137px;
	}

	.w-e {
		width: 94px;
	}

	th,
	td {
		padding: 0 0 4px;
		border-right: 1px solid #e1e1e1;
		border-bottom: 1px solid #e1e1e1;
		text-align: center;
		line-height: 22px;
		white-space: nowrap;
	}

	tbody tr {
		height: 34px;
	}

	tbody tr:last-child {
		height: 33px;
	}

	tbody tr.thin {
		height: 17px;
	}

	tbody tr.title {
		height: 64px;
	}

	th {
		background: #f7f7f7;
		font-weight: 400;
		font-size: 18px;
		color: #444;
	}

	thead th {
		height: 27px;
		padding-bottom: 2px;
		border-bottom-color: #aaa;
	}

	thead th.sel {
		border-bottom: 2px solid #217346;
	}

	th.sel {
		background: #e6e6e6;
		color: #217346;
	}

	tbody th {
		border-right-color: #aaa;
		vertical-align: bottom;
	}

	tbody th.sel {
		border-right: 2px solid #217346;
	}

	.thin th,
	.thin td {
		padding: 0;
	}

	.thin th span {
		display: flex;
		align-items: flex-end;
		justify-content: center;
		height: 16px;
		overflow: hidden;
	}

	.corner {
		margin: 3px 0 0 14px;
	}

	.title td:nth-child(3) {
		font-size: 21px;
		font-weight: 700;
		color: #000;
		border-bottom: 2px solid #000;
	}

	.navy {
		background: #305496;
		color: #fff;
		border-bottom-color: #a6a6a6;
	}

	.blue {
		background: #507bc7;
		color: #fff;
		border-color: #a6a6a6;
	}

	.grade {
		color: #1f77c8;
		border-right-color: #a6a6a6;
		border-bottom-color: #000;
	}

	.grade.last {
		border-right-color: #fff;
	}

	.dark {
		background: #404040;
		color: #fff;
		font-weight: 700;
		border-color: #a6a6a6;
	}

	.data {
		color: #000;
		border-color: #a6a6a6;
	}

	.count {
		position: relative;
		text-align: right;
		padding-right: 2px;
	}

	.shade {
		background: #c6c6c6;
		border-bottom-color: #808080;
	}

	.range {
		position: absolute;
		z-index: 1;
		left: -1px;
		top: -2px;
		width: 139px;
		height: 343px;
		border: 2px solid #217346;
	}

	.range i {
		position: absolute;
		right: -4px;
		bottom: -4px;
		width: 6px;
		height: 6px;
		border: 1px solid #fff;
		border-width: 1px 0 0 1px;
		background: #217346;
	}

	.vscroll {
		flex: 0 0 22px;
		display: flex;
		flex-direction: column;
		align-items: center;
		padding: 4px 0 2px;
	}

	.vscroll i {
		flex: 1;
		width: 9px;
		margin: 5px 0 51px;
		border-radius: 5px;
		background: #737373;
	}

	/* sheet tabs and status */
	.sheetbar {
		display: flex;
		height: 31px;
		align-items: flex-start;
	}

	.nav {
		width: 33px;
		height: 29px;
	}

	.nav:first-child {
		margin-left: 15px;
	}

	.tab {
		margin-left: 34px;
		width: 64px;
		height: 28px;
		font-size: 14px;
		background: #fff;
		border: 1px solid #e1e1e1;
		border-top: 0;
		border-radius: 0 0 5px 5px;
	}

	.tab span {
		line-height: 20px;
		border-bottom: 2px solid #217346;
	}

	.sheetbar .sep {
		height: 18px;
		margin: 6px 0 0 2px;
	}

	.add {
		width: 94px;
		height: 29px;
	}

	.hscroll {
		margin-left: auto;
		flex: 0 0 513px;
		display: flex;
		align-items: center;
		height: 29px;
		padding-right: 24px;
	}

	.hscroll .vdots {
		margin-right: 10px;
	}

	.thumb {
		flex: 1;
		height: 9px;
		margin: 0 30px 0 5px;
		border-radius: 5px;
		background: #737373;
	}

	.status {
		display: flex;
		align-items: center;
		height: 22px;
		padding: 0 19px 3px 13px;
		border-top: 1px solid #fff;
		font-size: 12px;
		white-space: nowrap;
	}

	.acc {
		margin-left: 19px;
		gap: 3px;
		font-size: 13px;
		font-weight: 500;
	}

	.stats {
		margin-left: auto;
		width: 251px;
		display: flex;
		gap: 16px;
	}

	.stats span:first-child {
		width: 104px;
	}

	.view {
		width: 40px;
		height: 21px;
	}

	.view.on {
		background: #e3e3e3;
	}

	.zoom {
		display: flex;
		align-items: center;
		gap: 4px;
		margin-left: 7px;
		font-size: 14px;
	}

	.zoom input {
		width: 100px;
		height: 12px;
		background: linear-gradient(#777, #777) center / 100% 1px no-repeat;
	}

	.zoom input::-webkit-slider-thumb {
		appearance: none;
		width: 5px;
		height: 11px;
		background: #555;
	}

	.pct {
		margin-left: 14px;
	}

	/* drop-down menus */
	.menu {
		position: absolute;
		z-index: 2;
		background: #fff;
		border: 1px solid #666;
		border-radius: 4px;
		box-shadow: 2px 4px 8px rgba(0, 0, 0, 0.18);
	}

	.menu.main {
		left: 786px;
		top: 106px;
		width: 171px;
		padding: 2px 0 2px 1px;
	}

	.menu.side {
		left: 956px;
		top: 108px;
		width: 221px;
		padding: 1px 1px 3px;
	}

	.item {
		position: relative;
		width: 100%;
		height: 42px;
		padding-left: 14px;
		justify-content: flex-start;
		font-weight: 500;
	}

	.side .label {
		padding-bottom: 2px;
	}

	.item.active {
		background: #f5f5f5;
	}

	.ico {
		width: 35px;
		padding-top: 3px;
	}

	.item.small {
		height: 28px;
		padding-left: 12px;
		font-weight: 400;
		color: #333;
	}

	.item.small .ico {
		width: 26px;
		padding-top: 0;
	}

	.arrow {
		margin: 0 7px 3px auto;
	}

	.item.more {
		height: 28px;
		padding-left: 37px;
		font-weight: 400;
	}

	hr {
		height: 1px;
		margin: 0;
		border: 0;
		background: #d2d2d2;
	}

	hr.short {
		margin: 0 0 2px 45px;
	}

	/* dialog */
	.dialog {
		position: absolute;
		z-index: 2;
		left: 570px;
		top: 549px;
		width: 616px;
		padding: 0 6px 8px;
		background: #f7f7f7;
		border: 1px solid #b5b5b5;
		border-radius: 8px;
		box-shadow:
			0 2px 5px rgba(0, 0, 0, 0.25),
			0 22px 24px rgba(0, 0, 0, 0.14);
	}

	.dlg-title {
		display: flex;
		align-items: center;
		height: 28px;
		margin-right: -6px;
		padding-left: 3px;
		color: #8a8a8a;
	}

	.dlg-title span {
		flex: 1;
	}

	.dlg-title .plain {
		width: 46px;
	}

	.lead {
		display: block;
		margin: 7px 2px 15px;
		font-weight: 500;
		color: #000;
	}

	.dlg-row {
		display: flex;
		align-items: center;
	}

	.field {
		position: relative;
		display: flex;
		width: 250px;
		height: 23px;
		border: 1px solid #a9a9b3;
		background: #fff;
	}

	.field input {
		flex: 1;
		padding-left: 4px;
		font-size: 12px;
	}

	.field button {
		width: 20px;
		border: 1px solid #c4c4c4;
		border-radius: 3px;
	}

	.with {
		margin: 0 9px;
		padding-bottom: 2px;
		white-space: nowrap;
	}

	.pick {
		flex: 1;
	}

	.pick select {
		width: 100%;
		padding: 0 0 2px 4px;
	}

	.drop {
		position: absolute;
		right: 2px;
		top: 1px;
		bottom: 1px;
		width: 17px;
		display: flex;
		align-items: center;
		justify-content: center;
		border: 1px solid #c4c4c4;
		border-radius: 2px;
		background: #fff;
		pointer-events: none;
	}

	.dlg-actions {
		display: flex;
		justify-content: flex-end;
		gap: 11px;
		margin-top: 16px;
		padding-right: 1px;
	}

	.dlg-actions button {
		width: 73px;
		height: 24px;
		padding-bottom: 2px;
		border: 1px solid #ccc;
		border-radius: 4px;
		background: #fdfdfd;
	}

	.grip {
		position: absolute;
		right: 1px;
		bottom: 1px;
	}

	/* red call-outs */
	.notes {
		position: absolute;
		z-index: 3;
		inset: 0;
		pointer-events: none;
		color: #f00;
	}

	.notes > * {
		position: absolute;
	}

	.frame {
		border: 3px solid #f00;
	}

	.f-item {
		left: 962px;
		top: 153px;
		width: 134px;
		height: 41px;
	}

	.f-input {
		left: 574px;
		top: 610px;
		width: 71px;
		height: 39px;
	}

	.f-select {
		left: 908px;
		top: 611px;
		width: 273px;
		height: 38px;
	}

	.f-ok {
		left: 1015px;
		top: 655px;
		width: 82px;
		height: 29px;
	}

	.under {
		height: 3px;
		background: #f00;
	}

	.u-cond {
		left: 810px;
		top: 100px;
		width: 65px;
	}

	.u-rule {
		left: 837px;
		top: 140px;
		width: 91px;
	}

	.u-with {
		left: 834px;
		top: 638px;
		width: 73px;
	}

	.pointer {
		left: 685px;
		top: 193px;
	}

	.cursor {
		left: 1048px;
		top: 169px;
	}

	p {
		margin: 0;
		display: flex;
		align-items: center;
		gap: 7px;
		font-size: 28px;
		line-height: 30px;
		white-space: nowrap;
	}

	p b {
		width: 25px;
		height: 25px;
		border-radius: 50%;
		background: #f00;
		color: #fff;
		font-size: 20px;
		line-height: 24px;
		text-align: center;
	}

	.n1 {
		left: 482px;
		top: 826px;
	}

	.n2 {
		left: 1100px;
		top: 162px;
	}

	.n3 {
		left: 654px;
		top: 655px;
	}

	.n4 {
		left: 917px;
		top: 581px;
	}

	.n5 {
		left: 988px;
		top: 654px;
	}

	.n2,
	.n5 {
		height: 30px;
	}
</style>
